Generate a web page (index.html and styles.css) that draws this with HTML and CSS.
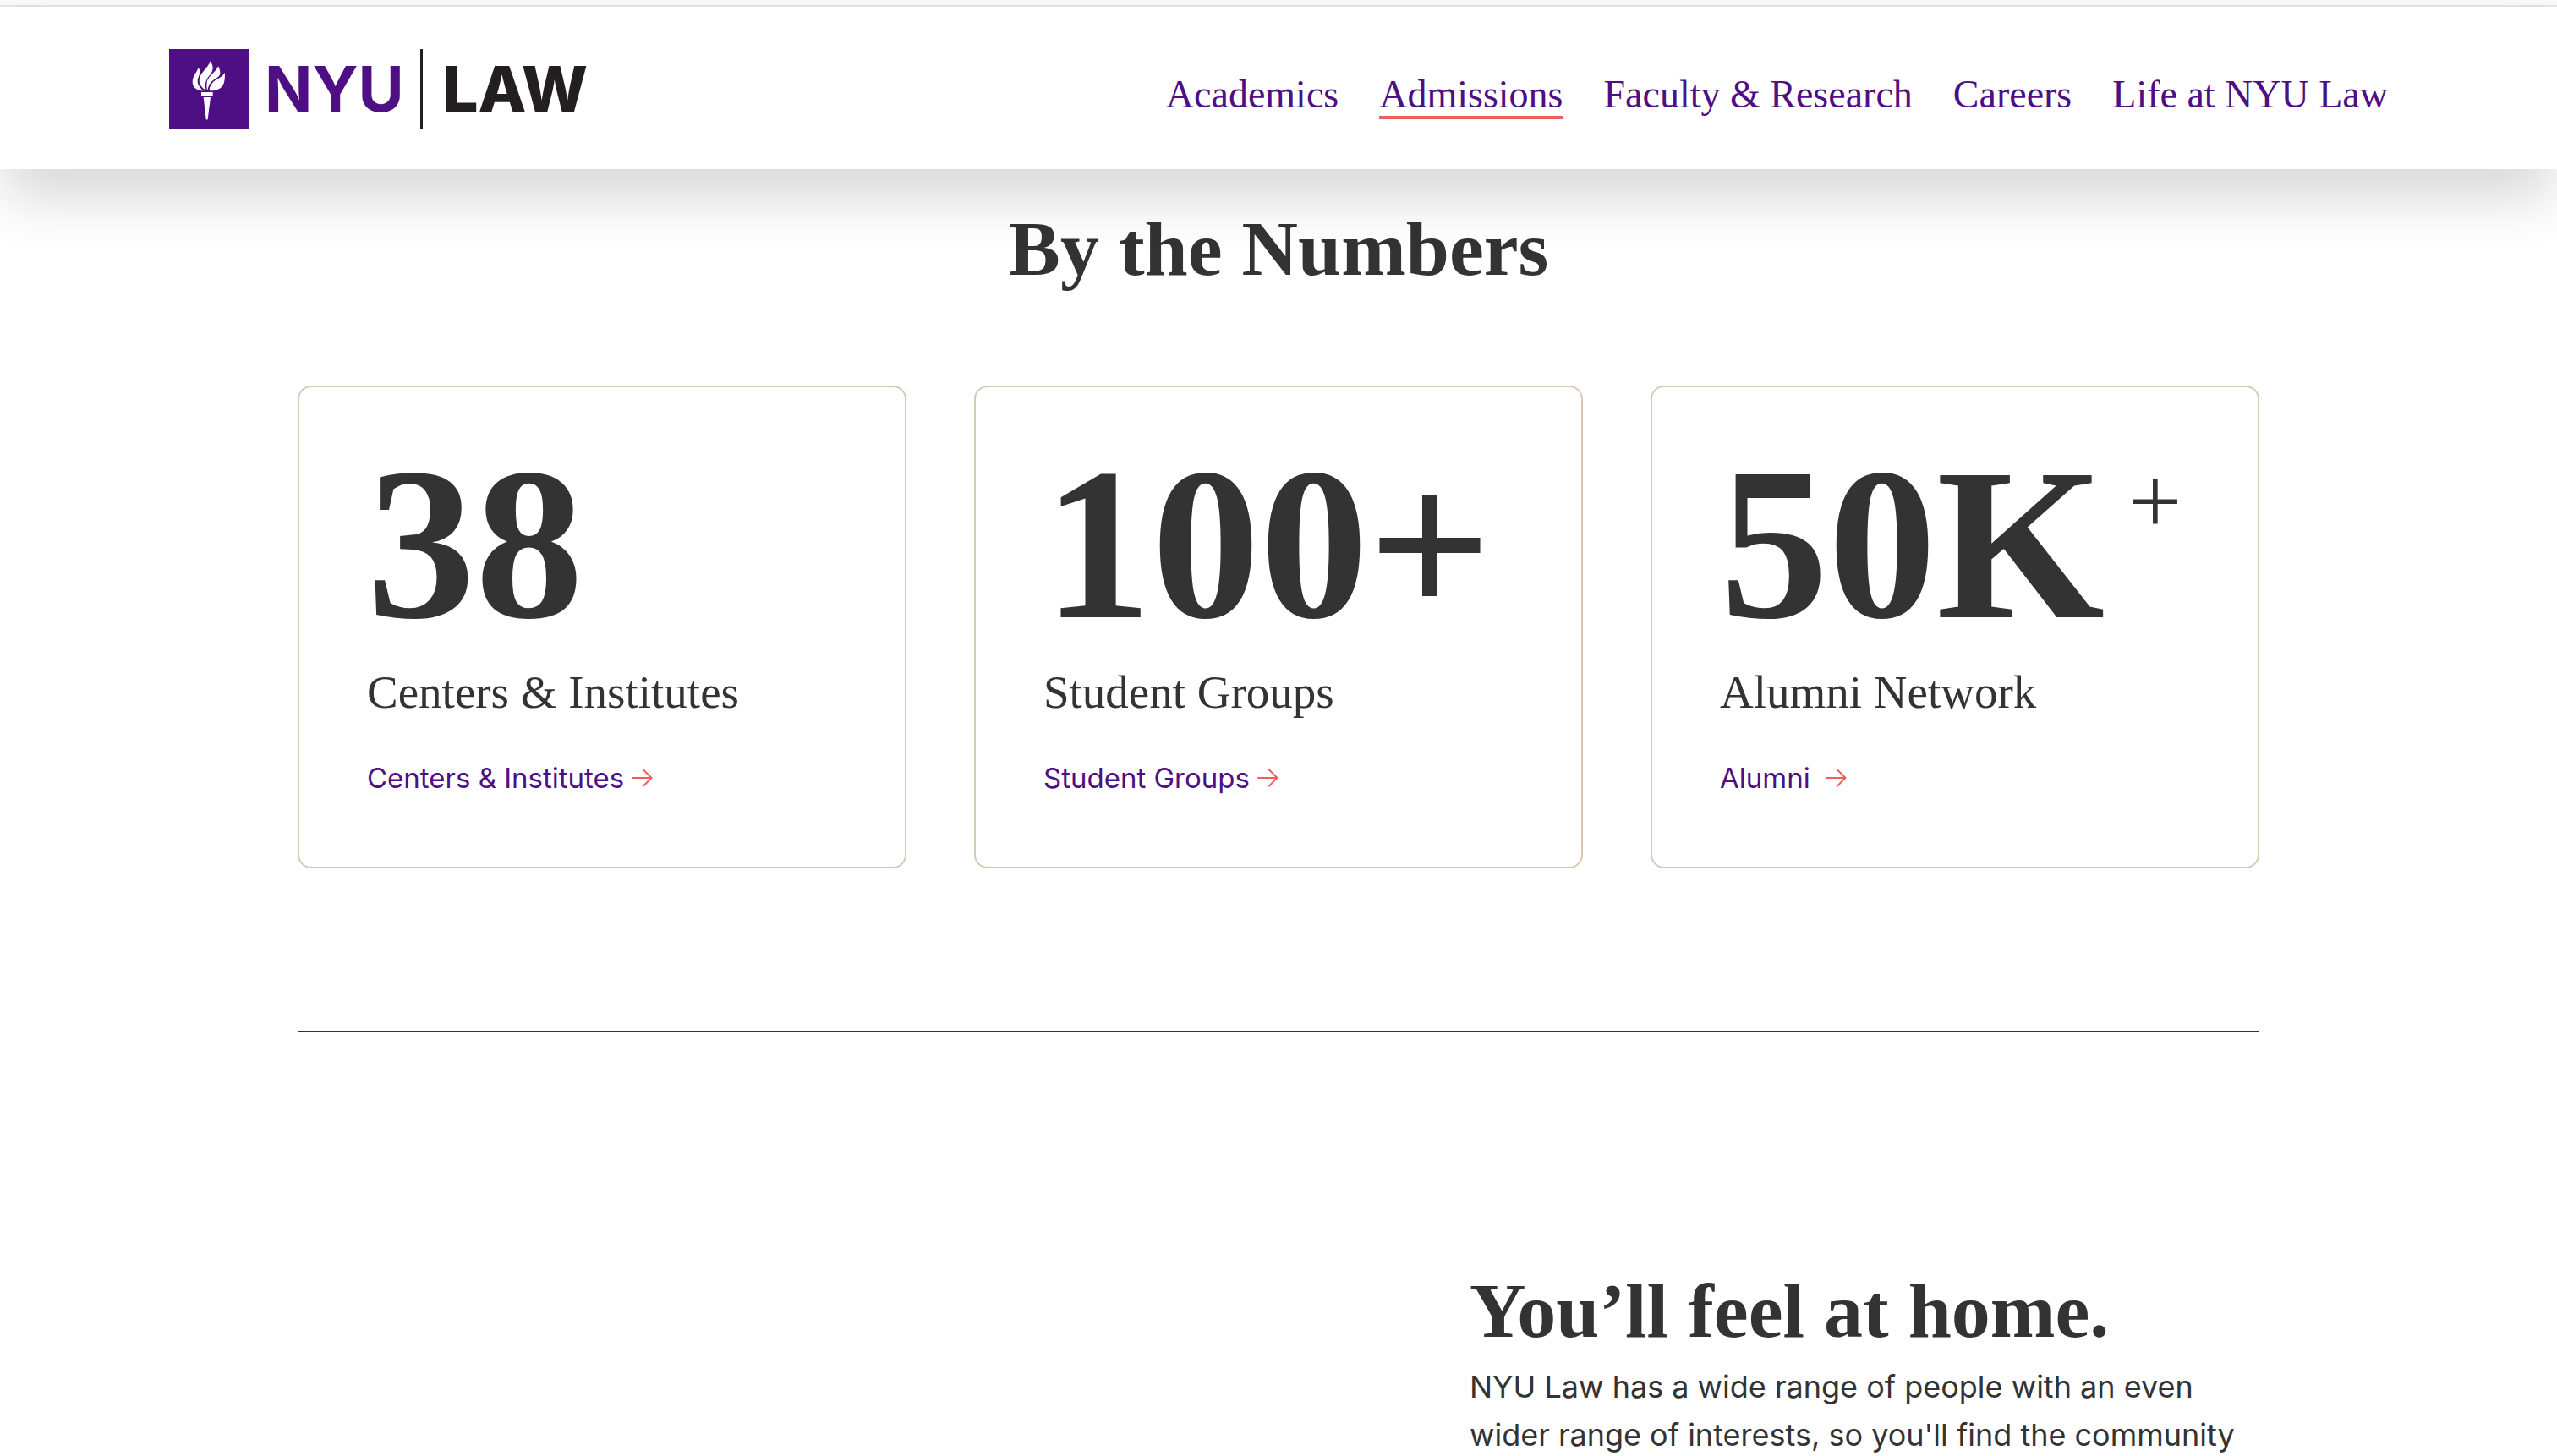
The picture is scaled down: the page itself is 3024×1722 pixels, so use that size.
FILE: index.html
```html
<!DOCTYPE html>
<html lang="en">
<head>
  <meta charset="utf-8">
  <title>NYU Law</title>
  <link rel="stylesheet" href="styles.css">
</head>
<body>
  <header class="site-header">
    <a class="logo" href="#" aria-label="NYU Law home">
      <svg class="logo-torch" viewBox="600 173 282 282" aria-hidden="true">
        <rect x="600" y="173" width="282" height="282" fill="#4f0f84"/>
        <g fill="#fff">
          <path d="M703 239C700 255 683 268 683 290C683 310 700 321 722 321C706 308 700 296 701 284C702 272 710 264 710 252C709 246 706 243 703 239Z"/>
          <path d="M745 216C741 240 708 255 707 285C707 300 718 312 731 320C727 305 727 292 735 278C742 266 755 258 755 240C754 228 750 222 745 216Z"/>
          <path d="M774 234C768 252 745 262 735 286C732 298 733 312 736 320C739 302 746 290 757 283C768 276 782 271 781 256C780 247 778 240 774 234Z"/>
          <path d="M797 256C790 275 765 278 753 294C745 304 743 312 743 321C765 322 785 315 792 300C797 288 799 270 797 256Z"/>
          <rect x="714" y="326" width="41" height="13"/>
          <path d="M722 344H747L737 422Q734 426 731 422Z"/>
        </g>
      </svg>
      <span class="logo-nyu">NYU</span>
      <span class="logo-law">LAW</span>
    </a>
    <nav class="main-nav" aria-label="Main">
      <a class="nav-link" href="#">Academics</a>
      <a class="nav-link is-active" href="#" aria-current="page">Admissions</a>
      <a class="nav-link" href="#">Faculty &amp; Research</a>
      <a class="nav-link" href="#">Careers</a>
      <a class="nav-link" href="#">Life at NYU Law</a>
    </nav>
  </header>

  <main class="container">
    <section class="numbers">
      <h2 class="heading heading-center">By the Numbers</h2>
      <div class="cards">
        <article class="card">
          <p class="card-number">38</p>
          <h3 class="card-label">Centers &amp; Institutes</h3>
          <a class="card-link" href="#">Centers &amp; Institutes<svg class="arrow" viewBox="0 0 25 22" aria-hidden="true"><path d="M1 11H23.5M14 1.5L23.5 11L14 20.5"/></svg></a>
        </article>
        <article class="card">
          <p class="card-number">100+</p>
          <h3 class="card-label">Student Groups</h3>
          <a class="card-link" href="#">Student Groups<svg class="arrow" viewBox="0 0 25 22" aria-hidden="true"><path d="M1 11H23.5M14 1.5L23.5 11L14 20.5"/></svg></a>
        </article>
        <article class="card">
          <p class="card-number">50K<sup class="card-sup">+</sup></p>
          <h3 class="card-label">Alumni Network</h3>
          <a class="card-link" href="#">Alumni&nbsp;<svg class="arrow" viewBox="0 0 25 22" aria-hidden="true"><path d="M1 11H23.5M14 1.5L23.5 11L14 20.5"/></svg></a>
        </article>
      </div>
    </section>

    <hr class="divider">

    <section class="home">
      <div class="home-text">
        <h2 class="heading">You’ll feel at home.</h2>
        <p class="home-body">NYU Law has a wide range of people with an even wider range of interests, so you'll find the community</p>
      </div>
    </section>
  </main>
</body>
</html>
```
FILE: styles.css
```css
*,
*::before {
  box-sizing: border-box;
}

html,
body {
  height: 100vh;
  overflow: hidden;
}

body {
  margin: 0;
  background: #fff;
  color: #333;
  font-family: Inter, "Liberation Sans", sans-serif;
}

h2,
h3,
p {
  margin: 0;
}

a {
  color: #4f0f84;
  text-decoration: none;
}

body::before {
  content: "";
  display: block;
  height: 8px;
  background: #faf9f7;
  border-bottom: 2px solid #e2e4dc;
}

/* Header */
.site-header {
  position: relative;
  z-index: 1;
  display: flex;
  align-items: center;
  justify-content: space-between;
  height: 192px;
  padding: 0 200px;
  background: #fff;
  box-shadow: 0 40px 60px -4px rgba(0, 0, 0, 0.15);
}

.logo {
  display: flex;
  align-items: center;
  padding-top: 2px;
  font-weight: 700;
  font-size: 74px;
  line-height: 94px;
}

.logo-torch {
  width: 94px;
  height: 94px;
}

.logo-nyu {
  padding: 0 19px;
}

.logo-law {
  padding-left: 24px;
  border-left: 3px solid #231f20;
  color: #231f20;
  font-weight: 800;
}

.main-nav {
  display: flex;
  gap: 48px;
  padding-top: 19px;
}

.nav-link {
  border-bottom: 4px solid transparent;
  font-family: "Liberation Serif", serif;
  font-size: 46px;
  line-height: 51px;
}

.nav-link.is-active {
  border-color: #ee5f5b;
}

/* Layout */
.container {
  max-width: 2320px;
  margin: 0 auto;
}

.heading {
  font-family: "Liberation Serif", serif;
  font-weight: 700;
  font-size: 92px;
  line-height: 104px;
}

.heading-center {
  text-align: center;
}

/* Numbers */
.numbers {
  padding-top: 42px;
}

.cards {
  display: grid;
  grid-template-columns: repeat(3, 1fr);
  gap: 80px;
  margin-top: 110px;
}

.card {
  padding: 80px 80px 85px;
  border: 2px solid #d9c9b2;
  border-radius: 16px;
}

.card-number {
  display: flex;
  align-items: flex-start;
  gap: 28px;
  font-family: "Liberation Serif", serif;
  font-weight: 700;
  font-size: 256px;
  line-height: 212px;
}

.card-sup {
  font-weight: 400;
  font-size: 112px;
  line-height: 110px;
}

.card-label {
  margin-top: 37px;
  font-family: "Liberation Serif", serif;
  font-weight: 400;
  font-size: 55px;
  line-height: 64px;
}

.card-link {
  display: flex;
  align-items: center;
  gap: 9px;
  margin-top: 49px;
  font-size: 33px;
  line-height: 40px;
}

.arrow {
  width: 25px;
  height: 22px;
  fill: none;
  stroke: #ee5f5b;
  stroke-width: 2;
  stroke-linecap: round;
  stroke-linejoin: round;
}

.divider {
  height: 2px;
  margin: 192px 0 0;
  border: 0;
  background: #333;
}

/* Home */
.home {
  display: grid;
  grid-template-columns: 1fr 934px;
  padding-top: 277px;
}

.home-text {
  grid-column: 2;
}

.home-body {
  margin-top: 10px;
  font-size: 36px;
  line-height: 57px;
}
```
